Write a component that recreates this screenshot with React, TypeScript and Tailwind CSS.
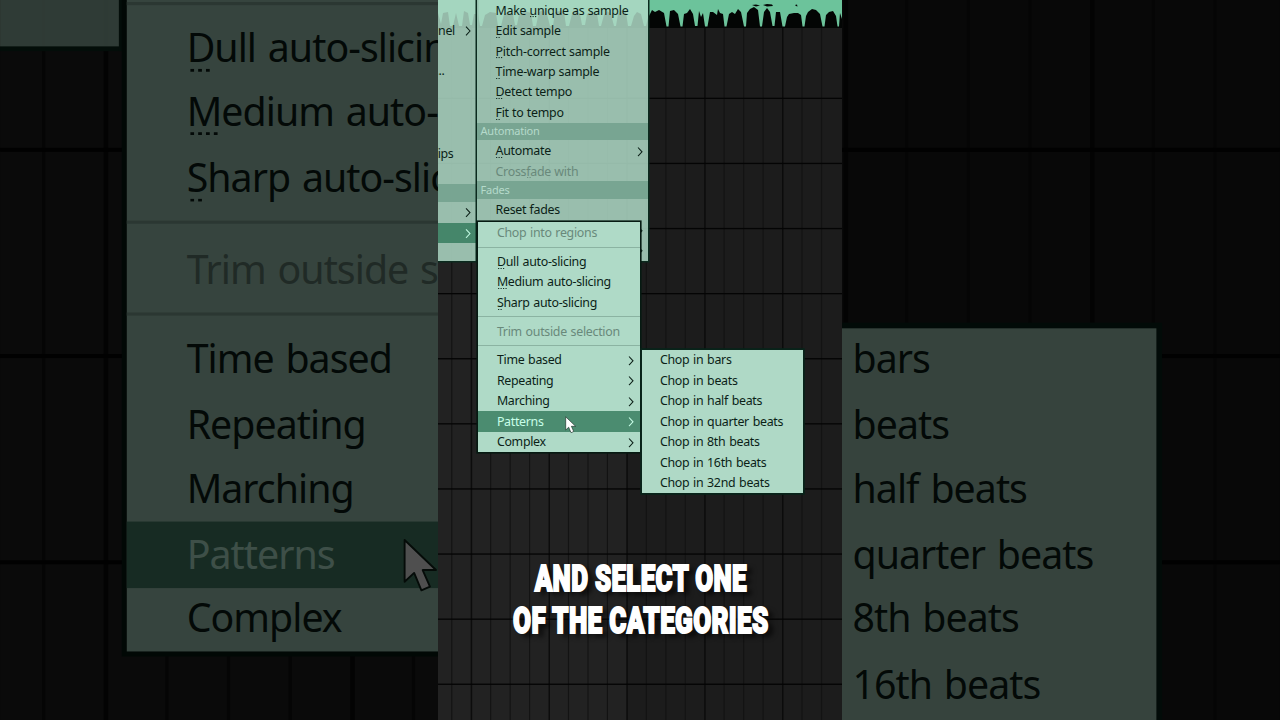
import type { ReactNode } from 'react';
import clsx from 'clsx';

interface MenuEntry {
  label?: string;
  // index of the accelerator letter and how many dots sit under it
  accel?: [number, number];
  arrow?: boolean;
  disabled?: boolean;
  active?: boolean;
  kind?: 'item' | 'header' | 'separator';
}

const CLIP_MENU: MenuEntry[] = [
  { label: 'Make unique as sample', accel: [5, 3] },
  { label: 'Edit sample', accel: [0, 2] },
  { label: 'Pitch-correct sample', accel: [0, 3] },
  { label: 'Time-warp sample', accel: [0, 2] },
  { label: 'Detect tempo', accel: [0, 3] },
  { label: 'Fit to tempo', accel: [0, 2] },
  { label: 'Automation', kind: 'header' },
  { label: 'Automate', accel: [0, 3], arrow: true },
  { label: 'Crossfade with', accel: [5, 2], disabled: true },
  { label: 'Fades', kind: 'header' },
  { label: 'Reset fades' },
  { arrow: true },
  { arrow: true },
];

const CHOP_MENU: MenuEntry[] = [
  { label: 'Chop into regions', disabled: true },
  { kind: 'separator' },
  { label: 'Dull auto-slicing', accel: [0, 3] },
  { label: 'Medium auto-slicing', accel: [0, 4] },
  { label: 'Sharp auto-slicing', accel: [0, 2] },
  { kind: 'separator' },
  { label: 'Trim outside selection', disabled: true },
  { kind: 'separator' },
  { label: 'Time based', arrow: true },
  { label: 'Repeating', arrow: true },
  { label: 'Marching', arrow: true },
  { label: 'Patterns', arrow: true, active: true },
  { label: 'Complex', arrow: true },
];

const PATTERN_MENU: MenuEntry[] = [
  { label: 'Chop in bars' },
  { label: 'Chop in beats' },
  { label: 'Chop in half beats' },
  { label: 'Chop in quarter beats' },
  { label: 'Chop in 8th beats' },
  { label: 'Chop in 16th beats' },
  { label: 'Chop in 32nd beats' },
];

function Chevron({ className }: { className?: string }) {
  return (
    <svg viewBox="0 0 6 10" className={clsx('h-[10px] w-[6px] shrink-0', className)} fill="none">
      <path d="M1 0.7L5 5L1 9.3" stroke="currentColor" strokeWidth="1.05" />
    </svg>
  );
}

function AccelLabel({ label, accel }: { label: string; accel?: [number, number] }) {
  if (!accel) return <>{label}</>;
  const [at, dots] = accel;
  return (
    <>
      {label.slice(0, at)}
      <span className="relative">
        {label[at]}
        <svg
          viewBox="0 0 10 1.2"
          className="absolute bottom-[1.1px] left-[0.8px] h-[1.2px] w-[10px]"
          fill="currentColor"
        >
          {Array.from({ length: dots }, (_, i) => (
            <rect key={i} x={i * 2.5} y="0.1" width="1.2" height="1" />
          ))}
        </svg>
      </span>
      {label.slice(at + 1)}
    </>
  );
}

function MenuRow({ entry, inset }: { entry: MenuEntry; inset: string }) {
  if (entry.kind === 'separator') {
    return (
      <div className="flex h-[8.4px] items-center">
        <div className="h-px w-full bg-[#8bb3a2]" />
      </div>
    );
  }
  if (entry.kind === 'header') {
    return (
      <div className="flex h-[17.8px] items-center bg-[#78a592] pl-[3.5px] text-[11px] tracking-[-0.2px] text-[#b5dacb]">
        {entry.label}
      </div>
    );
  }
  return (
    <div
      className={clsx(
        'flex h-[20.45px] items-center justify-between',
        inset,
        entry.active && 'bg-[#4b8c70] text-[#c8ffe8]',
        entry.disabled && 'text-[#69897b]',
      )}
    >
      <span className="leading-[17px] whitespace-nowrap">
        {entry.label && <AccelLabel label={entry.label} accel={entry.accel} />}
      </span>
      {entry.arrow && <Chevron className="translate-y-[0.8px]" />}
    </div>
  );
}

function Menu({
  entries,
  className,
  inset = 'pl-[18.9px] pr-[6px]',
}: {
  entries: MenuEntry[];
  className: string;
  inset?: string;
}) {
  return (
    <div className={clsx('absolute', className)}>
      {entries.map((entry, i) => (
        <MenuRow key={i} entry={entry} inset={inset} />
      ))}
    </div>
  );
}

// Right-hand sliver of the parent menu, most of it is off screen
function ParentMenu() {
  const row = 'flex h-[20.45px] items-center justify-end gap-[9.5px] pr-[6px]';
  return (
    <div className="absolute top-0 right-[365.5px] h-[261px] w-[90px] overflow-hidden bg-[#aed8c5]/86 shadow-[0_0_0_1.5px_#0b2a1e]">
      <div className={row} />
      <div className={row}>
        <span className="translate-y-[0.8px]">nnel</span>
        <Chevron />
      </div>
      <div className={row} />
      <div className={clsx(row, 'pr-[32px]!')}>...</div>
      <div className="h-[61.35px]" />
      <div className={clsx(row, 'pr-[23px]!')}>
        <span className="translate-y-[0.8px]">ips</span>
      </div>
      <div className={row} />
      <div className="h-[18.2px] bg-[#78a592]" />
      <div className={row}>
        <Chevron className="translate-y-[0.6px]" />
      </div>
      <div className={clsx(row, 'bg-[#45866a] text-[#c0f8e0]')}>
        <Chevron className="translate-y-[0.6px]" />
      </div>
    </div>
  );
}

function Playlist() {
  const columns = Array.from({ length: 20 }, (_, i) => 13.2 + i * 19.46);
  const tracks = Array.from({ length: 10 }, (_, i) => 98.3 + i * 65.1);
  return (
    <svg viewBox="0 0 404 720" className="absolute inset-0 h-full w-full">
      <rect width="189" height="720" fill="#222222" />
      <rect x="189" width="215" height="720" fill="#1c1c1c" />
      {columns.map((x, i) => (
        <rect
          key={x}
          x={x}
          y="28"
          width={i % 4 === 1 ? 1.5 : 1.1}
          height="692"
          fill={i % 4 === 1 ? '#0c0c0c' : '#131313'}
        />
      ))}
      {tracks.map((y) => (
        <rect key={y} x="0" y={y - 0.6} width="404" height="1.3" fill="#040404" />
      ))}
      <rect width="404" height="28" fill="#030504" />
      <path
        fill="#6cc39b"
        d="M0 0H404V19L402 13L401 26.5H399.5L398 16L395 11L391 12L388 15L386.500 26.500H384.500L382 14L378 10L374 9L370 12L368 16L366.500 26.500H364.500L363 15L360 13L356 13L351 14L349 17L347 26.500H344.500L342 12L338 12L336.500 26H334.500L332 12L329 8L326 12L324 26.500H322L320 10L316 7L312 9L309 13L308 26.500H306L303 12L300 9L297 14L294 12L291 14L288.500 26.500H286.500L285 14L282 13L280 9L279 15L275 12L272 12L269.500 26.500H267L265 13L263 17L261 11L259.500 26H257L255 14L252 9L249 13L246 14L244.500 26.500H242.500L240 14L236 10L232 11L230.500 26.500H228.500L226 13L221 10L217 12L214 10L210 18L208 26H206L203 14L199 12L196 16L193 26H190L188 12L184 10L180 14L178 26H176L173 14L169 11L166 15L163 26H161L159 14L153 12L149 14L147 25H144L142 14L138 10L134 14L131 26H128L126 12L121 11L117 12L115 26H112L109 14L105 10L101 12L98 26H95L93 13L87 11L81 15L79 25H77L75 14L70 12L66 14L63 26H60L58 13L52 12L47 15L44 26H42L40 14L36 14L34 25H32L30 13L26 11L24 26H21L18 13L15 26H12L10 12L5 13L3 24L0 13Z"
      />
      <path
        fill="#030504"
        d="M314 5L318 4.500L322 5.500L318 6.500ZM325 5L329 4L334 4.500L335 6L329 6.500ZM357 5L359 4.500L359.500 6.500L358 6Z"
      />
    </svg>
  );
}

function Cursor() {
  return (
    <svg viewBox="0 0 12 18" className="absolute top-[416px] left-[127px] h-[18px] w-[12px]">
      <path
        d="M0.7 0.8V14L3.7 11.2L6 16.7L8.700 15.500L6.400 10.300H10.600Z"
        fill="#fff"
        stroke="#10241c"
        strokeWidth="0.6"
        strokeLinejoin="round"
      />
    </svg>
  );
}

function Scene({ children }: { children?: ReactNode }) {
  return (
    <div className="relative h-[720px] w-[404px] shrink-0 overflow-hidden font-['Noto_Sans','Open_Sans',sans-serif] text-[12.4px] tracking-[-0.3px] text-[#0b1f17] [word-spacing:0.8px]">
      <Playlist />
      <ParentMenu />
      <Menu
        entries={CLIP_MENU}
        inset="pl-[18.5px] pr-[5.5px]"
        className="top-0 left-[39px] h-[261px] w-[171px] bg-[#aed8c5]/86 tracking-[-0.26px] shadow-[0_0_0_1.5px_#0b2a1e] [word-spacing:0.3px]"
      />
      <Menu
        entries={CHOP_MENU}
        className="top-[222.400px] left-[40px] w-[162px] bg-[#afdac7] shadow-[0_0_0_1.600px_#061a12]"
      />
      <Menu
        entries={PATTERN_MENU}
        inset="pl-[18.4px]"
        className="top-[349.700px] left-[203.600px] w-[161.200px] bg-[#afd9c6] shadow-[0_0_0_1.800px_#08241a]"
      />
      <Cursor />
      {children}
    </div>
  );
}

function Caption() {
  return (
    <div className="absolute top-[557px] right-0 left-[2px] flex flex-col items-center font-['Roboto','Open_Sans',sans-serif] text-[37.500px] leading-[42px] font-black tracking-[0.5px] whitespace-nowrap text-white [-webkit-text-stroke:2px_white] [text-shadow:8px_4px_6px_#000000b0] [word-spacing:0px]">
      <div className="origin-center scale-x-[0.69]">AND SELECT ONE</div>
      <div className="origin-center scale-x-[0.695]">OF THE CATEGORIES</div>
    </div>
  );
}

export default function App() {
  return (
    <main className="relative flex h-[720px] w-[1280px] justify-center overflow-hidden bg-black">
      {/* enlarged, dimmed copy filling the sides */}
      <div className="absolute inset-0 flex justify-center" aria-hidden="true">
        <div className="origin-center scale-[3.168]">
          <Scene />
        </div>
      </div>
      <div className="absolute inset-0 bg-black/69" />
      <Scene>
        <Caption />
      </Scene>
    </main>
  );
}
